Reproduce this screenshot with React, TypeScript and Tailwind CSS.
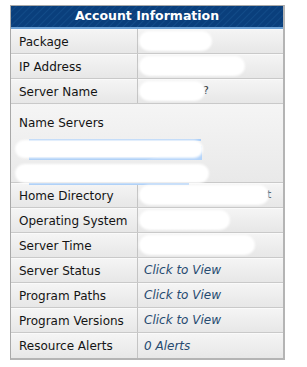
import React from 'react';

const rows: { label: string; value?: string; blob?: number; tail?: string }[] = [
  { label: 'Package', blob: 73 },
  { label: 'IP Address', blob: 106 },
  { label: 'Server Name', blob: 66, tail: '?' },
];

const rows2: { label: string; value?: string; blob?: number; tail?: string }[] = [
  { label: 'Home Directory', blob: 130, tail: 't' },
  { label: 'Operating System', blob: 91 },
  { label: 'Server Time', blob: 116 },
  { label: 'Server Status', value: 'Click to View' },
  { label: 'Program Paths', value: 'Click to View' },
  { label: 'Program Versions', value: 'Click to View' },
  { label: 'Resource Alerts', value: '0 Alerts' },
];

function Row({ label, value, blob, tail }: { label: string; value?: string; blob?: number; tail?: string }) {
  return (
    <div className="flex h-[25px] border-b border-[#c9c9c9] bg-gradient-to-b from-[#f5f5f5] to-[#e7e7e7] shadow-[inset_0_1px_0_#fafafa]">
      <div className="w-[127px] flex items-center pl-[8px] pt-[1px] border-r border-[#c4c4c4] text-[12px] text-[#141414]">
        {label}
      </div>
      <div className="flex-1 flex items-center pl-[6px] relative">
        {value && <span className="italic text-[12px] text-[#264a70]">{value}</span>}
        {blob && (
          <>
            <div className="h-[20px] bg-white rounded-full blur-[1px] -ml-[5px]" style={{ width: blob }} />
            {tail && <span className="text-[11px] text-[#333] -ml-[2px]">{tail}</span>}
          </>
        )}
      </div>
    </div>
  );
}

export default function App() {
  return (
    <div className="w-[307px] h-[367px] bg-white pt-[5px] pl-[10px]" style={{ fontFamily: '"DejaVu Sans", Verdana, sans-serif' }}>
      <div className="w-[275px] border border-[#a9a9a9] border-r-2 border-b-2 border-r-[#b4b4b4] border-b-[#b4b4b4]">
        {/* Header */}
        <div className="h-[23px] flex items-center justify-center border-b-2 border-[#6fa3d6] bg-[repeating-linear-gradient(135deg,#0a3f7c_0px,#0a3f7c_3px,#124b88_4px,#0a3f7c_5px)] text-white font-bold text-[12.5px]">
          Account Information
        </div>
        {rows.map((r) => (
          <Row key={r.label} {...r} />
        ))}
        {/* Name Servers */}
        <div className="h-[79px] border-b border-[#c9c9c9] bg-gradient-to-b from-[#f5f5f5] to-[#e9e9e9] pl-[8px] pt-[10px]">
          <div className="text-[12px] text-[#141414]">Name Servers</div>
          <div className="mt-[6px] flex flex-col gap-[3px]">
            <div className="relative h-[23px] w-[188px] -ml-[4px]">
              <div className="absolute left-[14px] top-[1px] w-[172px] h-[2px] bg-[#a9cdf7]" />
              <div className="absolute left-[14px] top-[19px] w-[172px] h-[3px] bg-[#a9cdf7]" />
              <div className="absolute left-[130px] top-[8px] w-[57px] h-[14px] bg-[#b4d4fa] [clip-path:polygon(100%_0,100%_100%,0_100%)]" />
              <div className="absolute inset-x-0 top-[2px] h-[18px] bg-white rounded-full blur-[1px]" />
            </div>
            <div className="relative h-[22px] w-[194px] -ml-[4px]">
              <div className="absolute left-[14px] top-[19px] w-[160px] h-[2px] bg-[#a9cdf7]" />
              <div className="absolute inset-x-0 top-0 h-[19px] bg-white rounded-full blur-[1px]" />
            </div>
          </div>
        </div>
        {rows2.map((r, i) => (
          <div key={r.label} className={i === rows2.length - 1 ? '[&>div]:border-b-0' : ''}>
            <Row {...r} />
          </div>
        ))}
      </div>
    </div>
  );
}
